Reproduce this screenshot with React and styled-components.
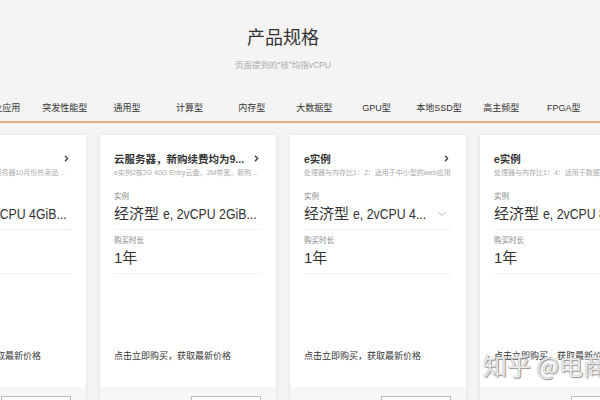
import React from 'react';
import styled, { createGlobalStyle } from 'styled-components';
import { ChevronRight, ChevronDown } from 'lucide-react';

const GlobalStyle = createGlobalStyle`
  html, body {
    margin: 0;
    padding: 0;
    height: 400px;
    overflow: hidden;
    background: #f4f4f4;
  }
  body {
    font-family: "Liberation Sans", "Noto Sans CJK SC", sans-serif;
    color: #333;
  }
`;

const Root = styled.div`
  position: relative;
  width: 600px;
  height: 400px;
  overflow: hidden;
`;

const Header = styled.header`
  display: flex;
  flex-direction: column;
  align-items: center;
  width: 566px;
  padding-top: 26px;
`;

const Title = styled.h1`
  margin: 0;
  font-size: 18px;
  line-height: 24px;
  font-weight: 400;
  color: #333;
`;

const Subtitle = styled.p`
  margin: 9px 0 0;
  font-size: 8.5px;
  line-height: 12px;
  color: #aaa;
`;

const TabBar = styled.nav`
  display: flex;
  margin-top: 30px;
  padding-right: 34px;
  border-bottom: 2px solid #e2ae86;
`;

const TabList = styled.div`
  flex: 1;
  min-width: 0;
  display: flex;
  justify-content: center;
`;

const Tab = styled.div`
  flex: none;
  width: 62.4px;
  padding-bottom: 6px;
  text-align: center;
  font-size: 9px;
  line-height: 14px;
  white-space: nowrap;
  color: #333;
`;

const CardRow = styled.div`
  display: flex;
  justify-content: center;
  gap: 14px;
  width: 566px;
  margin-top: 12px;
`;

const Card = styled.div`
  flex: none;
  width: 176px;
  display: flex;
  flex-direction: column;
  background: #fff;
  box-shadow: 0 0 4px rgba(0, 0, 0, 0.09);
`;

const CardBody = styled.div`
  box-sizing: border-box;
  height: 252px;
  display: flex;
  flex-direction: column;
  padding: 15px 15px 0 14px;
`;

const CardHead = styled.div`
  display: flex;
  align-items: center;
  justify-content: space-between;
  height: 16px;
`;

const CardTitle = styled.div`
  font-size: 10.5px;
  font-weight: 700;
  color: #333;
  white-space: nowrap;
  overflow: hidden;
`;

const Desc = styled.div`
  margin-top: 1px;
  font-size: 7px;
  line-height: 12px;
  color: #aaa;
  white-space: nowrap;
  overflow: hidden;
  text-overflow: ellipsis;
`;

const Field = styled.div`
  margin-top: ${(p) => p.$gap}px;
  padding-bottom: 5px;
  border-bottom: 1px solid #f0f0f0;
`;

const FieldLabel = styled.div`
  font-size: 7.5px;
  line-height: 12px;
  color: #888;
`;

const FieldValue = styled.div`
  display: flex;
  align-items: center;
  margin-top: 1px;
  font-size: 15px;
  line-height: 20px;
  color: #333;
`;

const ValueText = styled.div`
  flex: 1;
  min-width: 0;
  overflow: hidden;
  white-space: nowrap;
`;

/* the spec part is set narrow, as in the reference */
const Spec = styled.span`
  display: inline-block;
  font-size: 15px;
  transform: scaleX(0.82);
  transform-origin: left center;
`;

const SelectIcon = styled(ChevronDown)`
  flex: none;
  margin-right: 3px;
`;

const Note = styled.div`
  margin-top: auto;
  padding-bottom: 24px;
  font-size: 9px;
  line-height: 14px;
  color: #333;
  white-space: nowrap;
`;

const CardFoot = styled.div`
  display: flex;
  justify-content: flex-end;
  height: 40px;
  padding: 9px 15px 0;
  background: #f7f7f7;
`;

const BuyButton = styled.button`
  width: 70px;
  height: 26px;
  border: 1px solid #bbb;
  background: #fff;
  font-family: inherit;
  font-size: 9px;
  color: #333;
`;

const Watermark = styled.div`
  position: absolute;
  left: 483px;
  top: 350px;
  font-family: "Noto Sans CJK SC", sans-serif;
  font-size: 24px;
  line-height: 30px;
  white-space: nowrap;
  color: rgba(255, 255, 255, 0.85);
  text-shadow: 0 0 1px #777, 1px 1px 1px #999;
`;

const tabs = ['企业应用', '突发性能型', '通用型', '计算型', '内存型', '大数据型', 'GPU型', '本地SSD型', '高主频型', 'FPGA型'];

const cards = [
  { title: '新用户专享', desc: '新用户专享ECS爆款云服务器10月份热卖品，低至一折', spec: 'e, 2vCPU 4GiB...' },
  { title: '云服务器，新购续费均为9...', desc: 'e实例2核2G 40G Entry云盘，3M带宽，新购续费同价', spec: 'e, 2vCPU 2GiB...' },
  { title: 'e实例', desc: '处理器与内存比1：2：适用于中小型的web应用', spec: 'e, 2vCPU 4...', select: true },
  { title: 'e实例', desc: '处理器与内存比1：4：适用于数据库等场景', spec: 'e, 2vCPU 8GiB...' },
];

const App = () => {
  return (
    <Root>
      <GlobalStyle />
      <Header>
        <Title>产品规格</Title>
        <Subtitle>页面提到的“核”均指vCPU</Subtitle>
      </Header>

      <TabBar>
        <TabList>
          {tabs.map((t) => (
            <Tab key={t}>{t}</Tab>
          ))}
        </TabList>
      </TabBar>

      <CardRow>
        {cards.map((c, i) => (
          <Card key={i}>
            <CardBody>
              <CardHead>
                <CardTitle>{c.title}</CardTitle>
                <ChevronRight size={9} strokeWidth={3.5} color="#333" />
              </CardHead>
              <Desc>{c.desc}</Desc>

              <Field $gap={12}>
                <FieldLabel>实例</FieldLabel>
                <FieldValue>
                  <ValueText>
                    经济型 <Spec>{c.spec}</Spec>
                  </ValueText>
                  {c.select && <SelectIcon size={12} strokeWidth={1.5} color="#999" />}
                </FieldValue>
              </Field>

              <Field $gap={5}>
                <FieldLabel>购买时长</FieldLabel>
                <FieldValue>
                  <ValueText>1年</ValueText>
                </FieldValue>
              </Field>

              <Note>点击立即购买，获取最新价格</Note>
            </CardBody>
            <CardFoot>
              <BuyButton>立即购买</BuyButton>
            </CardFoot>
          </Card>
        ))}
      </CardRow>

      <Watermark>知乎 @电商</Watermark>
    </Root>
  );
};

export default App;
